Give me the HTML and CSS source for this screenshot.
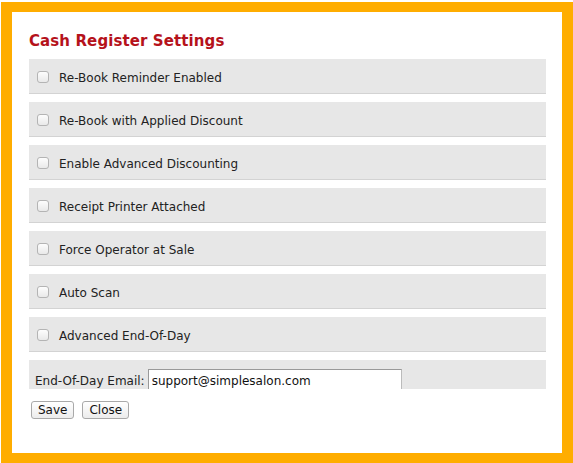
FILE: index.html
```html
<!DOCTYPE html>
<html lang="en">
<head>
  <meta charset="UTF-8" />
  <title>Cash Register Settings</title>
  <link rel="stylesheet" href="styles.css">
</head>
<body>

  <div class="dialog">
    <h2>Cash Register Settings</h2>

    <div class="settings-list">
      <label class="setting-row"><input type="checkbox"><span>Re-Book Reminder Enabled</span></label>
      <label class="setting-row"><input type="checkbox"><span>Re-Book with Applied Discount</span></label>
      <label class="setting-row"><input type="checkbox"><span>Enable Advanced Discounting</span></label>
      <label class="setting-row"><input type="checkbox"><span>Receipt Printer Attached</span></label>
      <label class="setting-row"><input type="checkbox"><span>Force Operator at Sale</span></label>
      <label class="setting-row"><input type="checkbox"><span>Auto Scan</span></label>
      <label class="setting-row"><input type="checkbox"><span>Advanced End-Of-Day</span></label>
      <div class="setting-row email-row">
        <span>End-Of-Day Email:</span>
        <input type="text" id="eod-email" value="support@simplesalon.com">
      </div>
    </div>

    <div class="buttons">
      <button>Save</button>
      <button>Close</button>
    </div>
  </div>

</body>
</html>
```

FILE: styles.css
```css
body {
  margin: 0;
  padding: 2px 0 0 1px;
  background: #fff;
  font-family: "DejaVu Sans", Verdana, sans-serif;
  color: #222;
}
.dialog {
  box-sizing: border-box;
  width: 572px;
  height: 461px;
  border: solid #ffad00;
  border-width: 10px 11px 10px 11px;
  background: #fff;
  padding: 0 16px 0 17px;
  overflow: hidden;
}
h2 {
  margin: 0;
  padding-top: 20px;
  height: 27px;
  font-size: 15px;
  font-weight: bold;
  color: #b5121b;
  line-height: 18px;
  letter-spacing: 0.1px;
}
.settings-list {
  height: 330px;
  overflow: hidden;
}
.setting-row {
  display: flex;
  align-items: center;
  height: 34px;
  margin-bottom: 8px;
  padding-left: 8px;
  background: #e7e7e7;
  border-bottom: 1px solid #d3d3d3;
  font-size: 12px;
  cursor: pointer;
}
.setting-row span {
  margin-top: 3px;
}
.setting-row input[type="checkbox"] {
  appearance: none;
  box-sizing: border-box;
  width: 12px;
  height: 12px;
  margin: 2px 10px 0 0;
  border: 1px solid #b4b4b4;
  border-radius: 3px;
  background: linear-gradient(#fdfdfd, #e9e9e9);
}
.email-row {
  align-items: flex-start;
  height: auto;
  padding: 9px 0 0 6px;
  border-bottom: none;
}
.email-row span {
  margin-top: 5px;
}
#eod-email {
  box-sizing: border-box;
  width: 254px;
  height: 24px;
  margin-left: 3px;
  padding: 0 3px;
  border: 1px solid #999;
  border-right-color: #bbb;
  font-family: "DejaVu Sans", Verdana, sans-serif;
  font-size: 12px;
  color: #111;
}
.buttons {
  display: flex;
  gap: 8px;
  margin-top: 12px;
  padding-left: 2px;
}
button {
  height: 18px;
  padding: 0 6px;
  font-family: "DejaVu Sans", sans-serif;
  font-size: 12px;
  color: #111;
  background: linear-gradient(#fff, #ececec);
  border: 1px solid #a9a9a9;
  border-radius: 3px;
  line-height: 16px;
}
```
